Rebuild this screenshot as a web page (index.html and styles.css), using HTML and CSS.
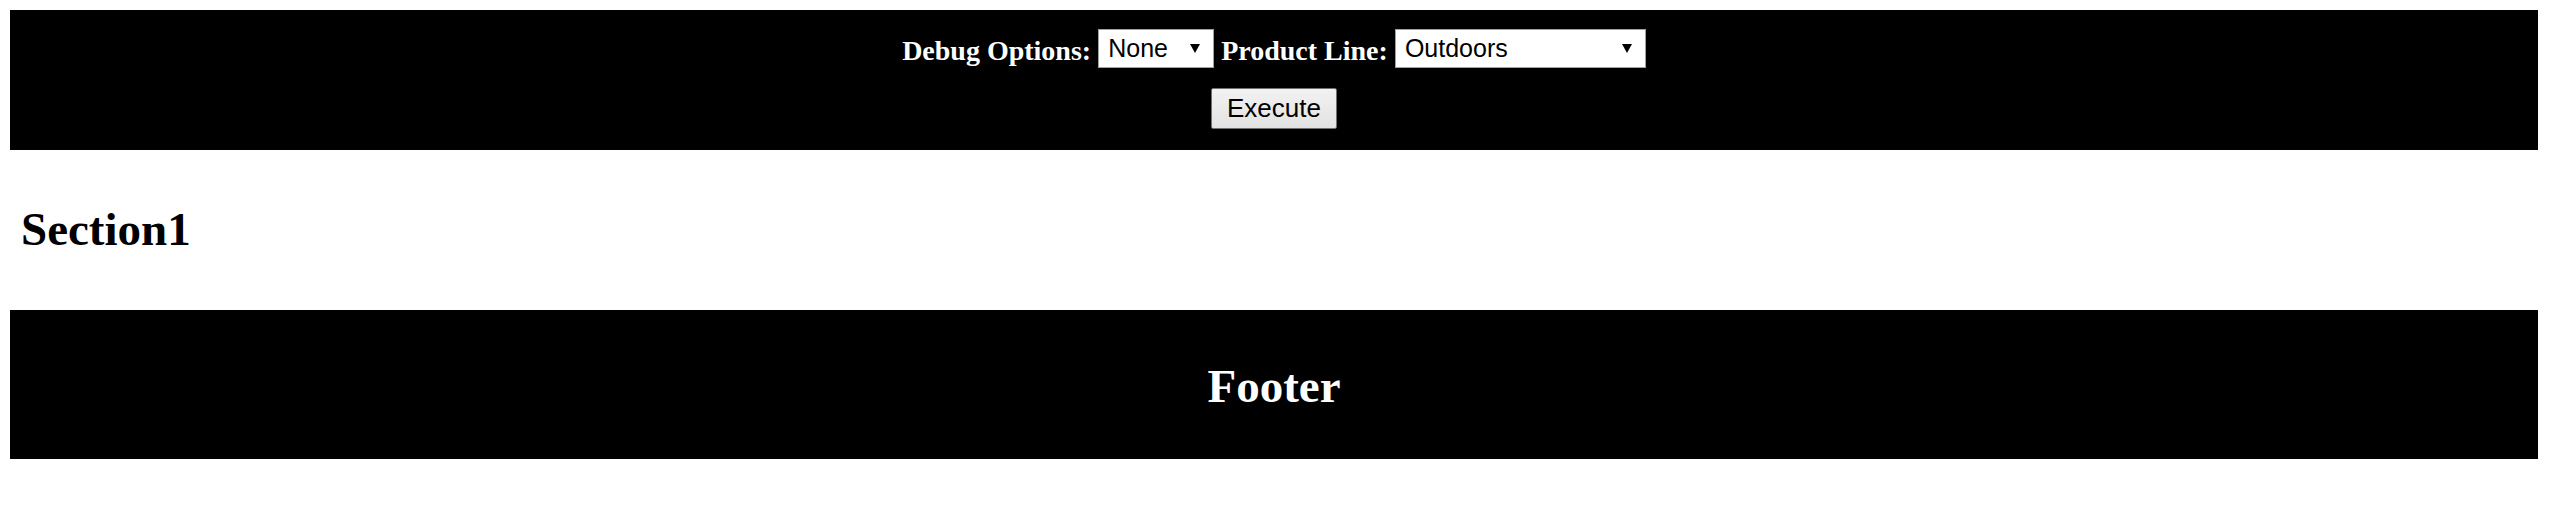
FILE: index.html
```html
<!DOCTYPE html>
<html>
<head>
<meta charset="utf-8">
<title>Page</title>
<link rel="stylesheet" href="styles.css">
</head>
<body>
<header class="topbar">
  <div class="controls">
    <label class="lbl" for="debug">Debug Options:</label>
    <span class="sel-wrap sel-debug">
      <select id="debug" class="sel"><option>None</option></select>
    </span>
    <label class="lbl" for="product">Product Line:</label>
    <span class="sel-wrap sel-product">
      <select id="product" class="sel"><option>Outdoors</option></select>
    </span>
  </div>
  <button class="exec" type="button">Execute</button>
</header>
<main>
  <h2 class="section-title">Section1</h2>
</main>
<footer class="footer">Footer</footer>
</body>
</html>
```

FILE: styles.css
```css
html, body {
  background: #ffffff;
}
body {
  margin: 10px 14px 10px 10px;
  font-family: "Liberation Serif", "Times New Roman", serif;
}
.topbar {
  background: #000000;
  height: 140px;
  box-sizing: border-box;
  padding-top: 19px;
  display: flex;
  flex-direction: column;
  align-items: center;
  gap: 20px;
}
.controls {
  display: flex;
  align-items: center;
  gap: 7px;
  height: 39px;
}
.lbl {
  color: #ffffff;
  font-family: "Liberation Serif", "Times New Roman", serif;
  font-weight: bold;
  font-size: 28px;
  line-height: 39px;
  position: relative;
  top: 2px;
}
.sel-wrap {
  position: relative;
  display: block;
  height: 39px;
}
.sel-debug { width: 116px; }
.sel-product { width: 251px; }
.sel {
  appearance: none;
  -webkit-appearance: none;
  width: 100%;
  height: 39px;
  box-sizing: border-box;
  margin: 0;
  border: 1px solid #a0a0a0;
  border-radius: 0;
  background: #ffffff;
  color: #000000;
  font-family: "Liberation Sans", Arial, sans-serif;
  font-size: 25px;
  padding: 0 0 0 9px;
  line-height: 37px;
}
.sel-wrap::after {
  content: "";
  position: absolute;
  right: 14px;
  top: 15px;
  width: 0;
  height: 0;
  border-left: 5px solid transparent;
  border-right: 5px solid transparent;
  border-top: 9px solid #000000;
  pointer-events: none;
}
.exec {
  width: 126px;
  height: 41px;
  box-sizing: border-box;
  margin: 0;
  padding: 0;
  border: 1px solid #707070;
  border-radius: 2px;
  background: linear-gradient(#f2f2f2, #e2e2e2);
  color: #000000;
  font-family: "Liberation Sans", Arial, sans-serif;
  font-size: 26px;
  line-height: 39px;
}
.section-title {
  margin: 52px 0 54px;
  padding-left: 11px;
  font-family: "Liberation Serif", "Times New Roman", serif;
  font-weight: bold;
  font-size: 47px;
  line-height: 54px;
  color: #000000;
}
.footer {
  background: #000000;
  color: #ffffff;
  height: 149px;
  box-sizing: border-box;
  padding-top: 49px;
  text-align: center;
  font-family: "Liberation Serif", "Times New Roman", serif;
  font-weight: bold;
  font-size: 47px;
  line-height: 54px;
}
```
